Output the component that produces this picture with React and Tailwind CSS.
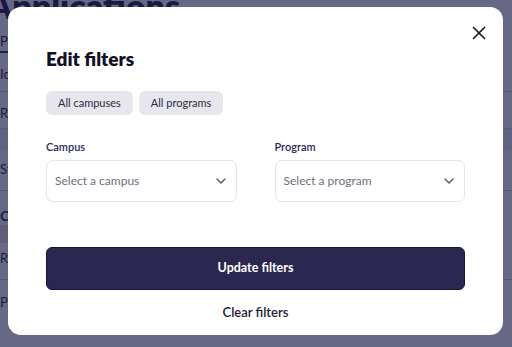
import { X, ChevronDown } from 'lucide-react'

const font = { fontFamily: 'Lato, "Noto Sans", sans-serif' }

function Select({ label, placeholder }) {
  return (
    <div className="flex-1 flex flex-col">
      <label className="text-[11px] font-semibold text-[#2b2a5c] leading-[16px] mb-[5px]">{label}</label>
      <div className="h-[42px] rounded-[7px] border border-[#e3e3ea] flex items-center justify-between pl-[8px] pr-[7px]">
        <span className="text-[12px] text-[#6f6e7e]">{placeholder}</span>
        <ChevronDown className="w-[16px] h-[16px] text-[#55546a]" strokeWidth={2} />
      </div>
    </div>
  )
}

export default function App() {
  return (
    <div className="relative w-[512px] h-[347px] overflow-hidden bg-white" style={font}>
      {/* page behind the dialog */}
      <div className="flex flex-col text-[#1d1c3a]">
        <h1 className="text-[34px] font-extrabold leading-[34px] -mt-[11px] -ml-[12px] whitespace-nowrap">Applications</h1>
        <div className="mt-[9px] h-[21px] text-[13px] border-b-2 border-[#2d2b7a] w-[40px]">Pro</div>
        <div className="mt-[12px] text-[13px] h-[26px]">Ide</div>
        <div className="border-t border-[#ccc]" />
        <div className="mt-[12px] text-[13px] h-[24px]">Res</div>
        <div className="h-[22px] bg-[#eeeef2] border-t border-[#ddd]" />
        <div className="mt-[10px] text-[13px] h-[30px]">Stu</div>
        <div className="border-t border-[#ccc]" />
        <div className="mt-[14px] text-[14px] font-bold h-[20px]">Ch</div>
        <div className="h-[18px] w-[30px] bg-[#f1e5d0] text-[12px] pl-[10px]">N</div>
        <div className="mt-[6px] text-[13px] h-[30px]">Re</div>
        <div className="border-t border-[#ccc]" />
        <div className="mt-[12px] flex items-center gap-[24px]">
          <span className="text-[13px]">Pre</span>
          <div className="flex border border-[#ccc] rounded-[6px] h-[22px]">
            <div className="w-[32px] border-r border-[#ccc]" />
            <div className="w-[32px] border-r border-[#ccc]" />
            <div className="w-[32px]" />
          </div>
        </div>
      </div>

      {/* overlay */}
      <div className="absolute inset-0 bg-[#181848]/[0.66] flex items-start justify-center pt-[7px]">
        <div className="w-[495px] h-[328px] -ml-[1px] bg-white rounded-[13px] relative px-[38px] pt-[40px] flex flex-col text-[#14132b]">
          <button className="absolute top-[15px] right-[13px] flex text-[#14132b]">
            <X className="w-[22px] h-[22px]" strokeWidth={1.8} />
          </button>
          <h2 className="text-[19px] font-extrabold leading-[24px] text-[#111126]">Edit filters</h2>
          <div className="flex gap-[6px] mt-[20px]">
            <span className="h-[24px] px-[12px] rounded-[6px] bg-[#e6e6ec] text-[11px] text-[#2a2945] flex items-center">All campuses</span>
            <span className="h-[24px] px-[12px] rounded-[6px] bg-[#e6e6ec] text-[11px] text-[#2a2945] flex items-center">All programs</span>
          </div>
          <div className="flex gap-[38px] mt-[24px]">
            <Select label="Campus" placeholder="Select a campus" />
            <Select label="Program" placeholder="Select a program" />
          </div>
          <button className="mt-[45px] h-[43px] rounded-[6px] bg-[#2a2850] border border-[#15143a] text-white text-[12.5px] font-bold">
            Update filters
          </button>
          <button className="mt-[13px] text-[13px] font-semibold text-[#1c1b33] text-center">Clear filters</button>
        </div>
      </div>
    </div>
  )
}
